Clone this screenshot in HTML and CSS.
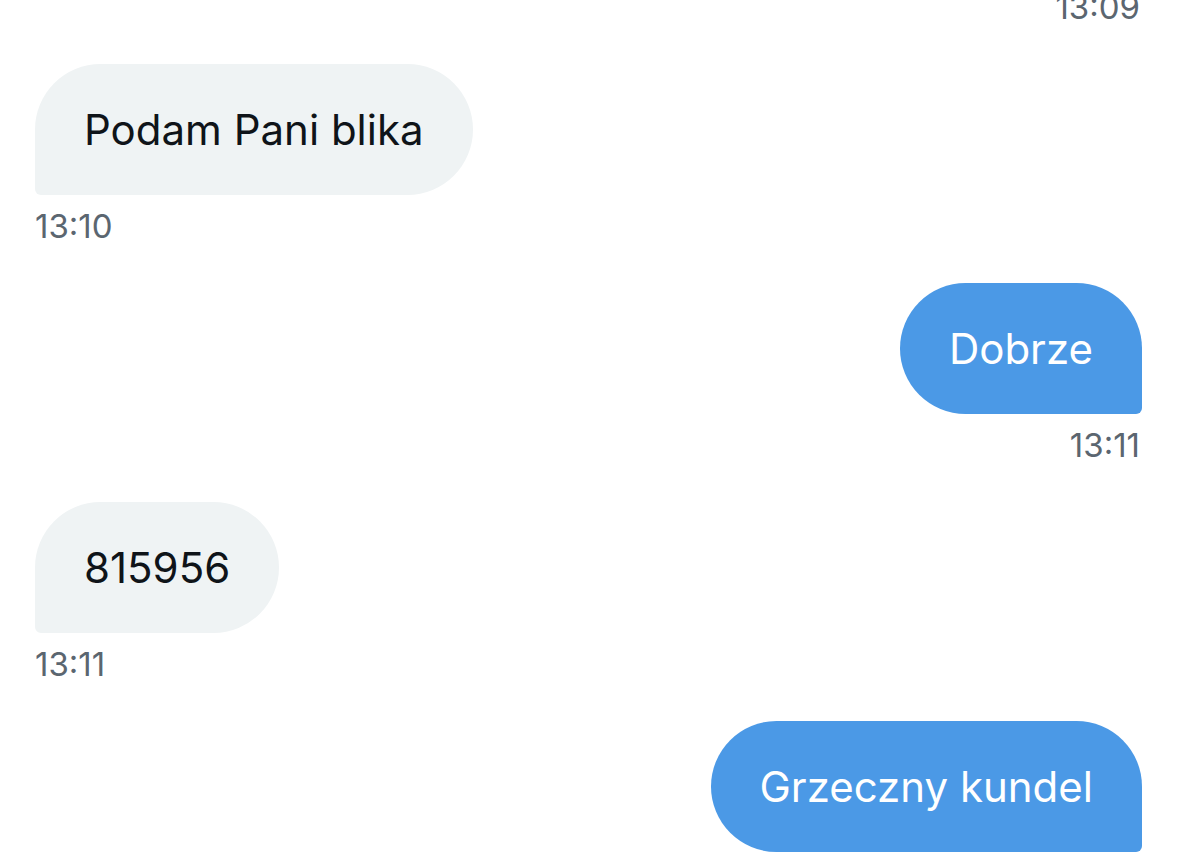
FILE: index.html
```html
<!DOCTYPE html>
<html lang="pl">
<head>
<meta charset="utf-8">
<link rel="stylesheet" href="styles.css">
</head>
<body>
<div class="chat">
  <div class="msg out">
    <div class="time">13:09</div>
  </div>
  <div class="msg in">
    <div class="bubble">Podam Pani blika</div>
    <div class="time">13:10</div>
  </div>
  <div class="msg out">
    <div class="bubble">Dobrze</div>
    <div class="time">13:11</div>
  </div>
  <div class="msg in">
    <div class="bubble">815956</div>
    <div class="time">13:11</div>
  </div>
  <div class="msg out">
    <div class="bubble">Grzeczny kundel</div>
  </div>
</div>
</body>
</html>
```

FILE: styles.css
```css
html, body {
  margin: 0;
  padding: 0;
  background: #ffffff;
  overflow: hidden;
}
body {
  font-family: Inter, "Liberation Sans", sans-serif;
}
.chat {
  display: flex;
  flex-direction: column;
  gap: 37px;
  padding: 0 36px 0 35px;
  margin-top: -13px;
}
.msg {
  display: flex;
  flex-direction: column;
  gap: 11px;
}
.msg.in { align-items: flex-start; }
.msg.out { align-items: flex-end; }
.bubble {
  height: 131px;
  display: flex;
  align-items: center;
  padding: 0 49px;
  font-size: 42px;
  box-sizing: border-box;
  white-space: nowrap;
}
.in .bubble {
  background: #eff3f4;
  color: #0f1419;
  border-radius: 66px 66px 66px 6px;
}
.out .bubble {
  background: #4b99e6;
  color: #ffffff;
  border-radius: 66px 66px 6px 66px;
}
.time {
  height: 40px;
  line-height: 40px;
  font-size: 33px;
  color: #5b6670;
}
.out .time { padding-right: 2px; }
```
